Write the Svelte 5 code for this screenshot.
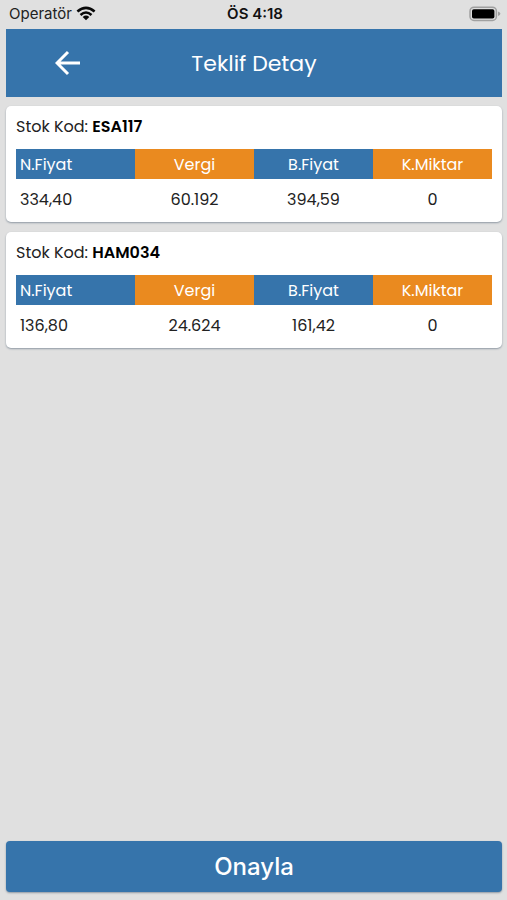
<script>
  const offers = [
    { code: 'ESA117', price: '334,40', tax: '60.192', gross: '394,59', amount: '0' },
    { code: 'HAM034', price: '136,80', tax: '24.624', gross: '161,42', amount: '0' }
  ];
</script>

<div class="screen">
  <div class="status">
    <div class="carrier">
      <span>Operatör</span>
      <svg width="20" height="15" viewBox="0 0 20 15" aria-hidden="true">
        <g fill="none" stroke="#080808" stroke-width="2.6">
          <path d="M1.4 5.6 Q10 -1.8 18.6 5.6" />
          <path d="M4.5 8.9 Q10 4.1 15.5 8.9" />
        </g>
        <path d="M6.7 10.9 Q10 8.1 13.3 10.9 L10 14.3 Z" fill="#080808" />
      </svg>
    </div>
    <span class="clock">ÖS 4:18</span>
    <div class="power">
      <svg width="32" height="16" viewBox="0 0 32 16" aria-hidden="true">
        <rect x="1" y="1.2" width="26.4" height="13.2" rx="4" fill="#dedede" stroke="#a0a0a0" stroke-width="1.5" />
        <rect x="3" y="3.2" width="22.4" height="9.4" rx="1.8" fill="#000" />
        <path d="M29 5.6 Q31.4 6.3 31.4 7.8 Q31.4 9.3 29 10 Z" fill="#a0a0a0" />
      </svg>
    </div>
  </div>

  <header>
    <button class="back" aria-label="Geri">
      <svg width="26" height="26" viewBox="0 0 26 26" aria-hidden="true">
        <path d="M25 13 H2.4 M13 2 L2 13 L13 24" fill="none" stroke="#fff" stroke-width="3" />
      </svg>
    </button>
    <h1>Teklif Detay</h1>
  </header>

  <main>
    {#each offers as offer}
      <section class="card">
        <h2>Stok Kod: <strong>{offer.code}</strong></h2>
        <table>
          <thead>
            <tr><th>N.Fiyat</th><th>Vergi</th><th>B.Fiyat</th><th>K.Miktar</th></tr>
          </thead>
          <tbody>
            <tr><td>{offer.price}</td><td>{offer.tax}</td><td>{offer.gross}</td><td>{offer.amount}</td></tr>
          </tbody>
        </table>
      </section>
    {/each}
  </main>

  <button class="confirm">Onayla</button>
</div>

<style>
  :global(body) {
    margin: 0;
    background: #e0e0e0;
  }
  .screen {
    box-sizing: border-box;
    min-height: 100vh;
    padding: 0 5px 8px 6px;
    display: flex;
    flex-direction: column;
    background: #e0e0e0;
    color: #222;
    font-family: Poppins, Inter, sans-serif;
  }
  .status {
    display: grid;
    grid-template-columns: 1fr auto 1fr;
    align-items: center;
    height: 29px;
    padding: 0 1px 2px 3px;
    box-sizing: border-box;
    font-family: Inter, sans-serif;
    font-size: 15px;
    line-height: 20px;
  }
  .carrier {
    display: flex;
    align-items: center;
    gap: 4px;
  }
  .clock {
    font-weight: 600;
    color: #111;
  }
  .power {
    display: flex;
    justify-content: flex-end;
  }
  svg {
    display: block;
  }
  header {
    display: grid;
    grid-template-columns: 1fr 2fr 1fr;
    align-items: center;
    height: 68px;
    background: #3674ab;
    color: #fff;
  }
  .back {
    justify-self: center;
    padding: 0;
    border: 0;
    background: none;
  }
  h1 {
    margin: 0;
    padding-top: 2px;
    font-size: 22px;
    line-height: 32px;
    font-weight: 400;
    text-align: center;
  }
  main {
    flex: 1;
    display: flex;
    flex-direction: column;
    gap: 10px;
    padding: 9px 0;
  }
  .card {
    padding: 9px 10px 3px;
    border-radius: 5px;
    background: #fff;
    box-shadow: 0 1px 2px #8f99a3;
  }
  h2 {
    margin: 0 0 10px;
    font-size: 16px;
    line-height: 24px;
    font-weight: 400;
  }
  strong {
    font-weight: 600;
    color: #000;
  }
  table {
    width: 100%;
    table-layout: fixed;
    border-collapse: collapse;
    font-size: 16px;
    line-height: 24px;
  }
  th,
  td {
    padding: 4px 4px 2px;
    font-weight: 400;
    text-align: center;
  }
  td {
    padding: 9px 4px 7px;
  }
  th {
    background: #3674ab;
    color: #fff;
  }
  th:nth-child(even) {
    background: #ea8a1f;
  }
  th:first-child,
  td:first-child {
    text-align: left;
  }
  .confirm {
    height: 51px;
    padding: 0;
    border: 0;
    border-radius: 4px;
    background: #3674ab;
    box-shadow: 0 1px 2px #8f99a3;
    color: #fff;
    font-family: Inter, sans-serif;
    font-size: 24px;
    line-height: 32px;
    font-weight: 500;
  }
</style>
